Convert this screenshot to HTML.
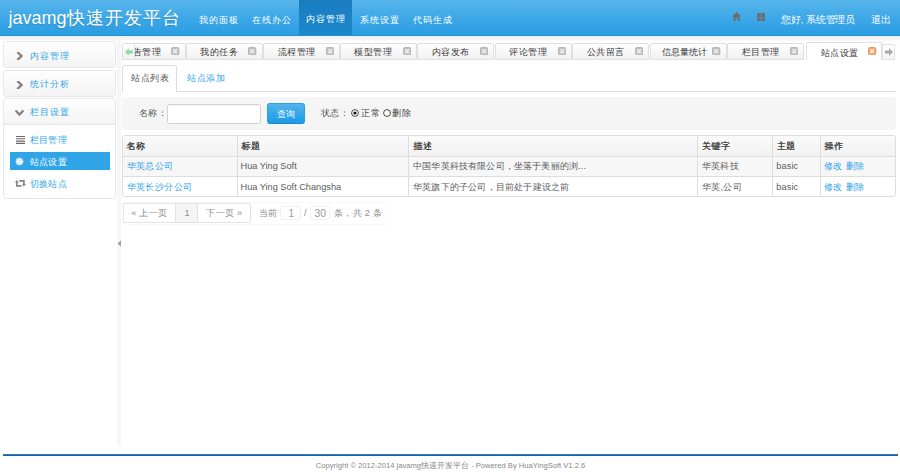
<!DOCTYPE html>
<html><head><meta charset="utf-8">
<style>
*{box-sizing:border-box;margin:0;padding:0}
html,body{width:900px;height:475px;overflow:hidden;background:#fff}
body{font-family:"Liberation Sans",sans-serif;font-size:9.2px;color:#333;position:relative}
.abs{position:absolute}
.nw{white-space:nowrap}
#hdr{left:0;top:0;width:900px;height:36px;background:linear-gradient(#57b5eb,#3ba7e7 55%,#2b9de2);border-bottom:1px solid #1d90d8}
#hshadow{left:0;top:36px;width:900px;height:5px;background:linear-gradient(#f4f2ee,#f2f2f2 25%,#f3f3f3 60%,#fdfdfd)}
#brand{left:8.4px;top:6.5px;font-size:18px;letter-spacing:0;color:#fff;line-height:22px;text-shadow:0 1px 1px rgba(0,0,0,.15)}
.nav{top:0;height:35px;line-height:40px;color:#fff;font-size:9.2px;letter-spacing:1px;text-align:center}
.nav.on{background:linear-gradient(#197dbf,#1c87cb);line-height:39px}
.acc{position:absolute;left:3px;width:113px;border:1px solid #e8e8e8;border-radius:3px;background:#fff;overflow:hidden}
.acch{font-size:9.2px;letter-spacing:1.2px;height:25px;background:linear-gradient(#fefefe,#f4f4f4);color:#2fa4e7;line-height:27px;padding-left:25.7px;position:relative}
.chev{position:absolute;left:12.3px;top:10px}
.li{position:absolute;left:5.5px;width:100px;height:18px;line-height:19px;padding-left:20px;color:#2fa4e7;font-size:9.2px;letter-spacing:0.35px}
.li.on{background:#2fa4e7;color:#fff;line-height:21px}
.tab{position:absolute;top:43.5px;height:16px;border:1px solid #e0e0e0;border-radius:2px 2px 0 0;background:linear-gradient(#fff,#f1f1f1);color:#383838;line-height:16px;font-size:9.2px}
.tab .t{position:absolute;left:13.5px;top:0;letter-spacing:0.5px}
.tab .x{position:absolute;left:61.7px;top:2.6px;width:8.3px;height:8.3px}
.th{top:140.5px;margin-left:0.3px;font-weight:normal;color:#3a3a3a;text-shadow:0.45px 0 0 #3a3a3a;line-height:11px;letter-spacing:0.4px}
.td{color:#5c5c5c;line-height:11px;letter-spacing:0.45px}
.td.a{color:#2fa4e7}
</style></head><body>
<div id="hdr" class="abs">
  <div id="brand" class="abs nw">javamg<span style="font-size:18px;letter-spacing:0.9px;margin-left:0.8px">快速开发平台</span></div>
  <div class="nav abs nw" style="left:191.7px;width:54px">我的面板</div>
  <div class="nav abs nw" style="left:245.2px;width:54px">在线办公</div>
  <div class="nav abs nw on" style="left:298.8px;width:53.1px;padding-left:2px">内容管理</div>
  <div class="nav abs nw" style="left:352.5px;width:54px">系统设置</div>
  <div class="nav abs nw" style="left:405.7px;width:54px">代码生成</div>
  <svg class="abs" style="left:732.4px;top:12.3px" width="9.2" height="9.2" viewBox="0 0 9.2 9.2"><path d="M0 4.6L4.6 0.1L9.2 4.6H7.7V9.2H5.6V6.1H3.6V9.2H1.5V4.6Z" fill="#6e6e6e"/></svg>
  <svg class="abs" style="left:757px;top:13px" width="8" height="8.4" viewBox="0 0 8 8.4"><path d="M0 0h3.7v3.9H0zM4.3 0H8v3.9H4.3zM0 4.5h3.7v3.9H0zM4.3 4.5H8v3.9H4.3z" fill="#6e6e6e"/></svg>
  <div class="abs nw" style="left:781px;top:14px;color:#fff;line-height:11px;font-size:9.75px;letter-spacing:-0.15px">您好, 系统管理员</div>
  <div class="abs nw" style="left:871px;top:14px;color:#fff;line-height:11px;font-size:9.75px;letter-spacing:0.3px">退出</div>
</div>
<div id="hshadow" class="abs"></div>

<!-- sidebar -->
<div class="acc" style="top:41.2px;height:26.6px"><div class="acch" style="line-height:28px"><svg class="chev" width="7" height="8" viewBox="0 0 7 8"><path d="M2 0.6 L5.6 4 L2 7.4" stroke="#828282" stroke-width="2.3" fill="none" stroke-linecap="round"/></svg>内容管理</div></div>
<div class="acc" style="top:70.2px;height:26.4px"><div class="acch"><svg class="chev" width="7" height="8" viewBox="0 0 7 8"><path d="M2 0.6 L5.6 4 L2 7.4" stroke="#828282" stroke-width="2.3" fill="none" stroke-linecap="round"/></svg>统计分析</div></div>
<div class="acc" style="top:98.4px;height:100.6px">
  <div class="acch" style="border-bottom:1px solid #e5e5e5;height:26px"><svg class="chev" style="left:10.5px;top:11px" width="9" height="6" viewBox="0 0 9 6"><path d="M1.3 1.2 L4.5 4.5 L7.7 1.2" stroke="#828282" stroke-width="2.3" fill="none" stroke-linecap="round"/></svg>栏目设置</div>
  <div class="li" style="top:32px"><svg class="abs" style="left:6px;top:5px" width="9" height="8" viewBox="0 0 9 8"><path d="M0 0.5h9M0 2.8h9M0 5.1h9M0 7.4h9" stroke="#6a6a6a" stroke-width="1.1"/></svg>栏目管理</div>
  <div class="li on" style="top:53px"><svg class="abs" style="left:5.7px;top:4.6px" width="9" height="9" viewBox="0 0 9 9"><polygon points="8.80,4.50 7.55,5.76 7.54,7.54 5.76,7.55 4.50,8.80 3.24,7.55 1.46,7.54 1.45,5.76 0.20,4.50 1.45,3.24 1.46,1.46 3.24,1.45 4.50,0.20 5.76,1.45 7.54,1.46 7.55,3.24" fill="#e6f3fc"/></svg>站点设置</div>
  <div class="li" style="top:76px"><svg class="abs" style="left:5.5px;top:4.6px" width="11" height="7" viewBox="0 0 11 7"><path d="M1.8 2v3.8h4.7" stroke="#858585" stroke-width="1.7" fill="none"/><path d="M-0.1 2.6L1.8 0.1L3.7 2.6Z" fill="#858585"/><path d="M4.3 0.8h4.6v3.6" stroke="#858585" stroke-width="1.7" fill="none"/><path d="M7 3.9L8.9 6.5L10.8 3.9Z" fill="#858585"/></svg>切换站点</div>
</div>

<!-- splitter -->
<div class="abs" style="left:116.7px;top:36px;width:4.3px;height:409px;background:#f6f6f6"></div>
<svg class="abs" style="left:117px;top:240px" width="4" height="7" viewBox="0 0 4 7"><path d="M4 0.2 L0.5 3.5 L4 6.8Z" fill="#a2a2a2"/></svg>

<!-- tabs -->
<div class="abs" style="left:122px;top:43px;width:774px;height:17px;">
</div>

<div class="abs" style="left:134.3px;top:41px;width:748px;height:19px;overflow:hidden">
  <div class="tab" style="left:-25.5px;top:2px;width:77px;height:17px"><span class="t nw">通告管理</span><svg class="x" viewBox="0 0 9 9"><rect x="0.5" y="0.5" width="8" height="8" rx="1.5" fill="#c4c4c4" stroke="#b0b0b0" stroke-width="1"/><path d="M2.5 2.5L6.5 6.5M6.5 2.5L2.5 6.5" stroke="#f4f4f4" stroke-width="1.3"/></svg></div>
  <div class="tab" style="left:51.5px;top:2px;width:77px;height:17px"><span class="t nw">我的任务</span><svg class="x" viewBox="0 0 9 9"><rect x="0.5" y="0.5" width="8" height="8" rx="1.5" fill="#c4c4c4" stroke="#b0b0b0" stroke-width="1"/><path d="M2.5 2.5L6.5 6.5M6.5 2.5L2.5 6.5" stroke="#f4f4f4" stroke-width="1.3"/></svg></div>
  <div class="tab" style="left:129.2px;top:2px;width:77px;height:17px"><span class="t nw">流程管理</span><svg class="x" viewBox="0 0 9 9"><rect x="0.5" y="0.5" width="8" height="8" rx="1.5" fill="#c4c4c4" stroke="#b0b0b0" stroke-width="1"/><path d="M2.5 2.5L6.5 6.5M6.5 2.5L2.5 6.5" stroke="#f4f4f4" stroke-width="1.3"/></svg></div>
  <div class="tab" style="left:205.7px;top:2px;width:77px;height:17px"><span class="t nw">模型管理</span><svg class="x" viewBox="0 0 9 9"><rect x="0.5" y="0.5" width="8" height="8" rx="1.5" fill="#c4c4c4" stroke="#b0b0b0" stroke-width="1"/><path d="M2.5 2.5L6.5 6.5M6.5 2.5L2.5 6.5" stroke="#f4f4f4" stroke-width="1.3"/></svg></div>
  <div class="tab" style="left:283.2px;top:2px;width:77px;height:17px"><span class="t nw">内容发布</span><svg class="x" viewBox="0 0 9 9"><rect x="0.5" y="0.5" width="8" height="8" rx="1.5" fill="#c4c4c4" stroke="#b0b0b0" stroke-width="1"/><path d="M2.5 2.5L6.5 6.5M6.5 2.5L2.5 6.5" stroke="#f4f4f4" stroke-width="1.3"/></svg></div>
  <div class="tab" style="left:360.7px;top:2px;width:77px;height:17px"><span class="t nw">评论管理</span><svg class="x" viewBox="0 0 9 9"><rect x="0.5" y="0.5" width="8" height="8" rx="1.5" fill="#c4c4c4" stroke="#b0b0b0" stroke-width="1"/><path d="M2.5 2.5L6.5 6.5M6.5 2.5L2.5 6.5" stroke="#f4f4f4" stroke-width="1.3"/></svg></div>
  <div class="tab" style="left:438.1px;top:2px;width:77px;height:17px"><span class="t nw">公共留言</span><svg class="x" viewBox="0 0 9 9"><rect x="0.5" y="0.5" width="8" height="8" rx="1.5" fill="#c4c4c4" stroke="#b0b0b0" stroke-width="1"/><path d="M2.5 2.5L6.5 6.5M6.5 2.5L2.5 6.5" stroke="#f4f4f4" stroke-width="1.3"/></svg></div>
  <div class="tab" style="left:515.5px;top:2px;width:77px;height:17px"><span class="t nw" style="left:11px;letter-spacing:0.1px">信息量统计</span><svg class="x" viewBox="0 0 9 9"><rect x="0.5" y="0.5" width="8" height="8" rx="1.5" fill="#c4c4c4" stroke="#b0b0b0" stroke-width="1"/><path d="M2.5 2.5L6.5 6.5M6.5 2.5L2.5 6.5" stroke="#f4f4f4" stroke-width="1.3"/></svg></div>
  <div class="tab" style="left:593px;top:2px;width:77px;height:17px"><span class="t nw">栏目管理</span><svg class="x" viewBox="0 0 9 9"><rect x="0.5" y="0.5" width="8" height="8" rx="1.5" fill="#c4c4c4" stroke="#b0b0b0" stroke-width="1"/><path d="M2.5 2.5L6.5 6.5M6.5 2.5L2.5 6.5" stroke="#f4f4f4" stroke-width="1.3"/></svg></div>
  <div class="tab" style="left:671.3px;top:0.6px;width:76px;height:18.4px;background:#fff;line-height:20px;border-bottom:none"><span class="t nw" style="left:14px">站点设置</span><svg class="x" style="top:4.6px" viewBox="0 0 9 9"><rect x="0.5" y="0.5" width="8" height="8" rx="1.5" fill="#f2aa78" stroke="#e0915a" stroke-width="1"/><path d="M2.6 2.6L6.4 6.4M6.4 2.6L2.6 6.4" stroke="#fff6ee" stroke-width="1.4"/></svg></div>
</div>
<div class="abs" style="left:122.3px;top:43px;width:12.5px;height:17px;border:1px solid #e0e0e0;border-radius:2px 0 0 0;background:linear-gradient(#fff,#f1f1f1)">
  <svg class="abs" style="left:1.5px;top:3.5px" width="8" height="8" viewBox="0 0 8 8"><path d="M0 4 L3.8 0.2 V2.5 H7.8 V5.5 H3.8 V7.8Z" fill="#86dea0"/></svg>
</div>
<div class="abs" style="left:882.1px;top:44px;width:13.4px;height:15.6px;border:1px solid #e2e2e2;border-radius:0 2px 0 0;background:linear-gradient(#fff,#f3f3f3)">
  <svg class="abs" style="left:2px;top:2.8px" width="8" height="8" viewBox="0 0 8 8"><path d="M8 4 L4 0 V2.4 H0 V5.6 H4 V8Z" fill="#aaa"/></svg>
</div>

<!-- sub tabs -->
<div class="abs" style="left:122px;top:91px;width:774px;height:1px;background:#ddd"></div>
<div class="abs nw" style="left:122px;top:65px;width:55px;height:27px;border:1px solid #ddd;border-bottom:none;border-radius:3px 3px 0 0;background:#fff;line-height:25px;padding-left:8.3px;color:#555;font-size:9.2px;letter-spacing:0.6px">站点列表</div>
<div class="abs nw" style="left:187px;top:66px;line-height:25px;color:#2fa4e7;font-size:9.2px;letter-spacing:0.6px">站点添加</div>

<!-- search -->
<div class="abs" style="left:122px;top:97.2px;width:774px;height:32.4px;background:#f5f5f5;border-radius:4px"></div>
<div class="abs nw" style="left:138.9px;top:107.8px;color:#555;line-height:11px;font-size:9.2px;letter-spacing:0.45px">名称：</div>
<div class="abs" style="left:167.2px;top:103.5px;width:93.6px;height:20.1px;background:#fff;border:1px solid #d2d2d2;border-radius:2.5px;box-shadow:inset 0 1px 1px rgba(0,0,0,.05)"></div>
<div class="abs nw" style="left:267px;top:103.3px;width:38px;height:20.4px;background:linear-gradient(#54b4eb,#2fa4e7 60%,#1d9ce5);border:1px solid #2a9fe3;border-bottom-color:#178acc;border-radius:3px;color:#fff;text-align:center;line-height:20px">查询</div>
<div class="abs nw" style="left:321px;top:107.8px;color:#555;line-height:11px;font-size:9.2px;letter-spacing:0.3px">状态：</div>
<svg class="abs" style="left:350.8px;top:109.2px" width="8" height="8" viewBox="0 0 8 8"><circle cx="4" cy="4" r="3.4" fill="#fff" stroke="#333" stroke-width="0.9"/><circle cx="4" cy="4" r="1.6" fill="#111"/></svg>
<div class="abs nw" style="left:361.4px;top:107.8px;color:#444;line-height:11px;font-size:9.2px;letter-spacing:0.6px">正常</div>
<svg class="abs" style="left:382.8px;top:109.2px" width="8" height="8" viewBox="0 0 8 8"><circle cx="4" cy="4" r="3.4" fill="#fff" stroke="#333" stroke-width="0.9"/></svg>
<div class="abs nw" style="left:392.4px;top:107.8px;color:#444;line-height:11px;font-size:9.2px;letter-spacing:0.6px">删除</div>

<!-- table -->
<div class="abs" style="left:122px;top:135px;width:774px;height:61.5px;border:1px solid #ddd;border-radius:3px;overflow:hidden">
  <div class="abs" style="left:0;top:0;width:772px;height:20px;background:linear-gradient(#fafafa,#f2f2f2)"></div>
  <div class="abs" style="left:0;top:20px;width:772px;height:21px;background:#f7f7f7;border-top:1px solid #ddd;border-bottom:1px solid #ddd"></div>
  <div class="abs" style="left:113.8px;top:0;width:1px;height:61px;background:#ddd"></div>
  <div class="abs" style="left:285.3px;top:0;width:1px;height:61px;background:#ddd"></div>
  <div class="abs" style="left:574.1px;top:0;width:1px;height:61px;background:#ddd"></div>
  <div class="abs" style="left:649.4px;top:0;width:1px;height:61px;background:#ddd"></div>
  <div class="abs" style="left:697px;top:0;width:1px;height:61px;background:#ddd"></div>
</div>
<div class="abs nw th" style="left:126px">名称</div>
<div class="abs nw th" style="left:241px">标题</div>
<div class="abs nw th" style="left:413px">描述</div>
<div class="abs nw th" style="left:701.5px">关键字</div>
<div class="abs nw th" style="left:776.3px">主题</div>
<div class="abs nw th" style="left:824px">操作</div>

<div class="abs nw td a" style="left:126.5px;top:161px">华英总公司</div>
<div class="abs nw td" style="left:240.5px;top:161px;letter-spacing:0">Hua Ying Soft</div>
<div class="abs nw td" style="left:413px;top:161px;letter-spacing:0.17px">中国华英科技有限公司，坐落于美丽的浏...</div>
<div class="abs nw td" style="left:701.5px;top:161px">华英科技</div>
<div class="abs nw td" style="left:776.3px;top:161px;letter-spacing:0.1px">basic</div>
<div class="abs nw td a" style="left:824px;top:161px">修改 删除</div>

<div class="abs nw td a" style="left:126.5px;top:182px">华英长沙分公司</div>
<div class="abs nw td" style="left:240.5px;top:182px;letter-spacing:0">Hua Ying Soft Changsha</div>
<div class="abs nw td" style="left:413px;top:182px;letter-spacing:0.2px">华英旗下的子公司，目前处于建设之前</div>
<div class="abs nw td" style="left:701.5px;top:182px">华英,公司</div>
<div class="abs nw td" style="left:776.3px;top:182px;letter-spacing:0.1px">basic</div>
<div class="abs nw td a" style="left:824px;top:182px">修改 删除</div>

<!-- pagination -->
<div class="abs" style="left:122px;top:203px;width:267px;height:21px;border-radius:3px;box-shadow:0 0 1.5px rgba(0,0,0,.12)"></div>
<div class="abs" style="left:122.5px;top:203.4px;width:128px;height:20px;border:1px solid #e3e3e3;border-radius:2px;overflow:hidden;background:#fff">
  <div class="abs" style="left:51.8px;top:0;width:23.2px;height:19px;background:#f5f5f5;border-left:1px solid #e3e3e3;border-right:1px solid #e3e3e3"></div>
</div>
<div class="abs nw" style="left:131.2px;top:208px;color:#8c8c8c;line-height:11px;letter-spacing:0.3px">« 上一页</div>
<div class="abs nw" style="left:184.5px;top:208px;color:#8c8c8c;line-height:11px">1</div>
<div class="abs nw" style="left:206.3px;top:208px;color:#8c8c8c;line-height:11px;letter-spacing:0.3px">下一页 »</div>
<div class="abs nw" style="left:259px;top:208px;color:#8c8c8c;line-height:11px;letter-spacing:0.3px">当前</div>
<div class="abs" style="left:280.3px;top:205.6px;width:20.7px;height:14.4px;border:1px solid #f1f1f1;border-radius:3px"></div>
<div class="abs nw" style="left:288.6px;top:208px;color:#999;line-height:11px;font-size:10px">1</div>
<div class="abs nw" style="left:304px;top:208px;color:#8c8c8c;line-height:11px">/</div>
<div class="abs" style="left:310.1px;top:205.6px;width:20.2px;height:14.4px;border:1px solid #f1f1f1;border-radius:3px"></div>
<div class="abs nw" style="left:314.6px;top:208px;color:#999;line-height:11px;font-size:10.4px">30</div>
<div class="abs nw" style="left:334px;top:208px;color:#8c8c8c;line-height:11px;letter-spacing:0.3px">条，共 2 条</div>

<!-- footer -->
<div class="abs" style="left:3.2px;top:454.2px;width:894.6px;height:1.9px;background:linear-gradient(#5a95c8,#1565ad 45%,#1565ad)"></div>
<div class="abs nw" style="left:315.8px;top:461px;font-size:7.6px;color:#888;line-height:9px">Copyright © 2012-2014 javamg快速开发平台 - Powered By HuaYingSoft V1.2.6</div>
</body></html>
